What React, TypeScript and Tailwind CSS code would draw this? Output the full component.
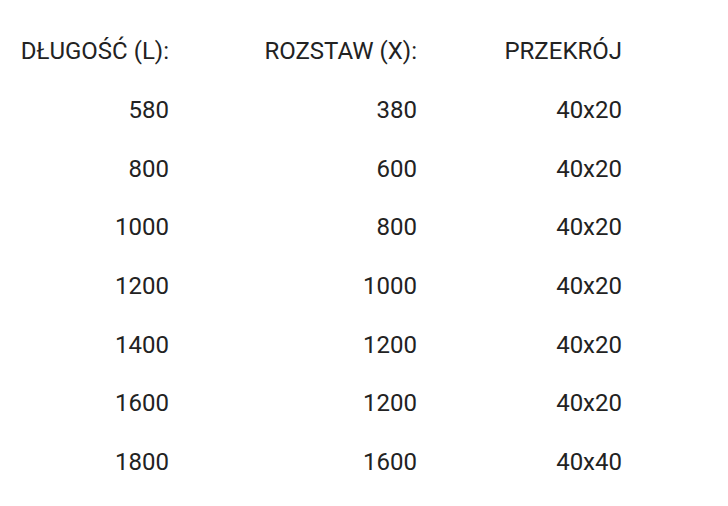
const rows: [string, string, string][] = [
  ["580", "380", "40x20"],
  ["800", "600", "40x20"],
  ["1000", "800", "40x20"],
  ["1200", "1000", "40x20"],
  ["1400", "1200", "40x20"],
  ["1600", "1200", "40x20"],
  ["1800", "1600", "40x40"],
];

function Row({ cells }: { cells: [string, string, string] }) {
  return (
    <div className="grid h-[58.67px] grid-cols-[169px_248px_205px] items-center text-right">
      {cells.map((c, i) => (
        <span key={i}>{c}</span>
      ))}
    </div>
  );
}

export default function App() {
  return (
    <div className="min-h-[506px] w-[728px] bg-white pt-[22px] font-['Roboto',sans-serif] text-[24px] text-[#222]">
      <Row cells={["DŁUGOŚĆ (L):", "ROZSTAW (X):", "PRZEKRÓJ"]} />
      {rows.map((r, i) => (
        <Row key={i} cells={r} />
      ))}
    </div>
  );
}
